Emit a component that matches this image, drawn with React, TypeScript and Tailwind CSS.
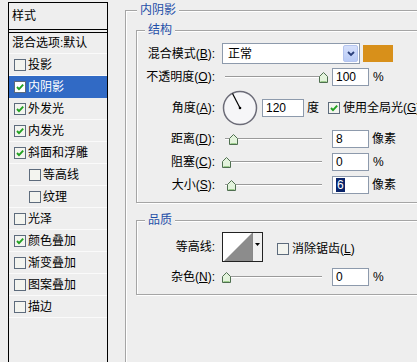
import React from "react";

const FONT = "font-['Liberation_Sans','Noto_Sans_CJK_SC',sans-serif]";

function Box({ checked, white }: { checked?: boolean; white?: boolean }) {
  return (
    <svg width="12" height="12" viewBox="0 0 12 12" className="shrink-0">
      <rect x="0.5" y="0.5" width="11" height="11" fill={white ? "#ffffff" : "#f3f4ef"} stroke="#5d6b7c" />
      {checked && (
        <path d="M3 6 L5 8.2 L9.2 3.6" stroke="#21a121" strokeWidth="1.9" fill="none" />
      )}
    </svg>
  );
}

function Thumb() {
  return (
    <svg width="9" height="11" viewBox="0 0 9 11">
      <path d="M0.5 4.5 L4.5 0.5 L8.5 4.5 L8.5 10.5 L0.5 10.5 Z" fill="#e3f3dc" stroke="#4f6f50" />
      <path d="M1.5 9.5 L7.5 9.5" stroke="#9ccc8c" />
    </svg>
  );
}

function Slider({ pos }: { pos: number }) {
  return (
    <div className="relative ml-[7px] h-[12px] w-[106px] shrink-0">
      <div className="absolute left-[3px] right-[6px] top-[5px] h-[2px] border-t border-[#9a9a9a] border-b border-b-white" />
      <div className="absolute top-[1px]" style={{ left: pos }}>
        <Thumb />
      </div>
    </div>
  );
}

function Input({ value, w = 37, sel }: { value: string; w?: number; sel?: boolean }) {
  return (
    <div
      className="ml-[4px] flex h-[18px] shrink-0 items-center border border-[#8d9aac] bg-white pl-[3px] text-[12px]"
      style={{ width: w }}
    >
      {sel ? <span className="bg-[#0a246a] px-[1px] text-white">{value}</span> : value}
    </div>
  );
}

function Label({ children }: { children: React.ReactNode }) {
  return <div className="w-[78px] shrink-0 whitespace-nowrap text-right">{children}</div>;
}

function Dial() {
  return (
    <svg width="36" height="36" viewBox="0 0 36 36" className="ml-[7px] shrink-0">
      <circle cx="18" cy="18" r="16.5" fill="#f6f6f8" stroke="#6c6c78" strokeWidth="1.5" />
      <line x1="18" y1="18" x2="10.5" y2="3.5" stroke="#000" strokeWidth="1.2" />
      <circle cx="18" cy="18" r="1.3" fill="#000" />
    </svg>
  );
}

const items = [
  { t: "投影", c: false },
  { t: "内阴影", c: true, sel: true },
  { t: "外发光", c: true },
  { t: "内发光", c: true },
  { t: "斜面和浮雕", c: true },
  { t: "等高线", c: false, ind: true },
  { t: "纹理", c: false, ind: true },
  { t: "光泽", c: false },
  { t: "颜色叠加", c: true },
  { t: "渐变叠加", c: false },
  { t: "图案叠加", c: false },
  { t: "描边", c: false },
];

export default function App() {
  return (
    <div className={`flex h-[362px] w-[417px] overflow-hidden bg-[#eeeeee] text-[12px] leading-[14px] text-black ${FONT}`}>
      {/* Left list */}
      <div className="flex w-[108px] shrink-0 pl-[8px] pt-[2px]">
        <div className="flex flex-1 flex-col border-x border-t border-black">
          <div className="flex h-[27px] items-center border-b border-black pl-[3px]">样式</div>
          <div className="h-[2px]" />
          <div className="flex flex-1 flex-col border-t border-black">
            <div className="flex h-[21px] items-center border-b border-[#fafafa] pl-[3px]">混合选项:默认</div>
            {items.map((it) => (
              <div
                key={it.t}
                className={`flex h-[22px] items-center gap-[2px] border-b ${
                  it.sel ? "border-[#316ac5] bg-[#316ac5] text-white" : "border-[#fafafa]"
                } ${it.ind ? "pl-[20px]" : "pl-[5px]"}`}
              >
                <Box checked={it.c} white={it.sel} />
                <span>{it.t}</span>
              </div>
            ))}
          </div>
        </div>
      </div>

      {/* Right */}
      <div className="flex-1 overflow-hidden">
        <div className="relative ml-[17px] mt-[10px] h-[400px] w-[320px] border-l border-t border-[#a5a5a5] shadow-[inset_1px_1px_0_#ffffff]">
          <span className="absolute left-[11px] top-[-8px] bg-[#eeeeee] px-[3px] text-[#1f4fa8]">内阴影</span>

          {/* Structure */}
          <div className="relative ml-[10px] mt-[19px] h-[173px] w-[300px] border border-[#a5a5a5] shadow-[inset_1px_1px_0_#ffffff,1px_1px_0_#ffffff]">
            <span className="absolute left-[8px] top-[-8px] bg-[#eeeeee] px-[3px] text-[#1f4fa8]">结构</span>

            <div className="mt-[12px] flex h-[21px] items-center">
              <Label>
                混合模式(<u>B</u>):
              </Label>
              <div className="ml-[7px] flex h-[21px] w-[138px] shrink-0 items-center border border-[#8d9aac] bg-white pl-[5px]">
                <span>正常</span>
                <div className="ml-auto mr-[1px] flex h-[17px] w-[15px] items-center justify-center rounded-[2px] border border-[#b4c4ee] bg-gradient-to-b from-[#d6e0fb] to-[#b9cbf6]">
                  <svg width="8" height="6" viewBox="0 0 8 6">
                    <path d="M1 1 L4 4 L7 1" stroke="#2a3f7a" strokeWidth="1.8" fill="none" />
                  </svg>
                </div>
              </div>
              <div className="ml-[3px] h-[17px] w-[30px] shrink-0 bg-[#d8901a]" />
            </div>

            <div className="mt-[3px] flex h-[19px] items-center">
              <Label>
                不透明度(<u>O</u>):
              </Label>
              <Slider pos={97} />
              <Input value="100" />
              <span className="ml-[4px]">%</span>
            </div>

            <div className="mt-[4px] flex h-[35px] items-center">
              <Label>
                角度(<u>A</u>):
              </Label>
              <Dial />
              <Input value="120" w={42} />
              <span className="ml-[3px]">度</span>
              <div className="ml-[9px] flex items-center gap-[3px] whitespace-nowrap">
                <Box checked />
                <span>
                  使用全局光(<u>G</u>)
                </span>
              </div>
            </div>

            <div className="mt-[5px] flex h-[18px] items-center">
              <Label>
                距离(<u>D</u>):
              </Label>
              <Slider pos={7} />
              <Input value="8" />
              <span className="ml-[3px]">像素</span>
            </div>

            <div className="mt-[5px] flex h-[18px] items-center">
              <Label>
                阻塞(<u>C</u>):
              </Label>
              <Slider pos={0} />
              <Input value="0" />
              <span className="ml-[4px]">%</span>
            </div>

            <div className="mt-[5px] flex h-[18px] items-center">
              <Label>
                大小(<u>S</u>):
              </Label>
              <Slider pos={5} />
              <Input value="6" sel />
              <span className="ml-[3px]">像素</span>
            </div>
          </div>

          {/* Quality */}
          <div className="relative ml-[10px] mt-[17px] h-[75px] w-[300px] border border-[#a5a5a5] shadow-[inset_1px_1px_0_#ffffff,1px_1px_0_#ffffff]">
            <span className="absolute left-[8px] top-[-8px] bg-[#eeeeee] px-[3px] text-[#1f4fa8]">品质</span>

            <div className="mt-[11px] flex h-[30px] items-center">
              <Label>等高线:</Label>
              <div className="ml-[7px] flex h-[30px] w-[41px] shrink-0 border border-[#222]">
                <svg width="29" height="28" viewBox="0 0 29 28" className="bg-white">
                  <polygon points="1,28 29,0 29,28" fill="#8c8c8c" />
                </svg>
                <div className="flex flex-1 justify-center border-l border-[#888] bg-[#f0f0f0] pt-[10px]">
                  <svg width="5" height="3" viewBox="0 0 5 3">
                    <polygon points="0,0 5,0 2.5,3" fill="#000" />
                  </svg>
                </div>
              </div>
              <div className="ml-[14px] flex items-center gap-[3px] self-start pt-[10px] whitespace-nowrap">
                <Box />
                <span>
                  消除锯齿(<u>L</u>)
                </span>
              </div>
            </div>

            <div className="mt-[6px] flex h-[18px] items-center">
              <Label>
                杂色(<u>N</u>):
              </Label>
              <Slider pos={0} />
              <Input value="0" />
              <span className="ml-[4px]">%</span>
            </div>
          </div>
        </div>
      </div>
    </div>
  );
}
